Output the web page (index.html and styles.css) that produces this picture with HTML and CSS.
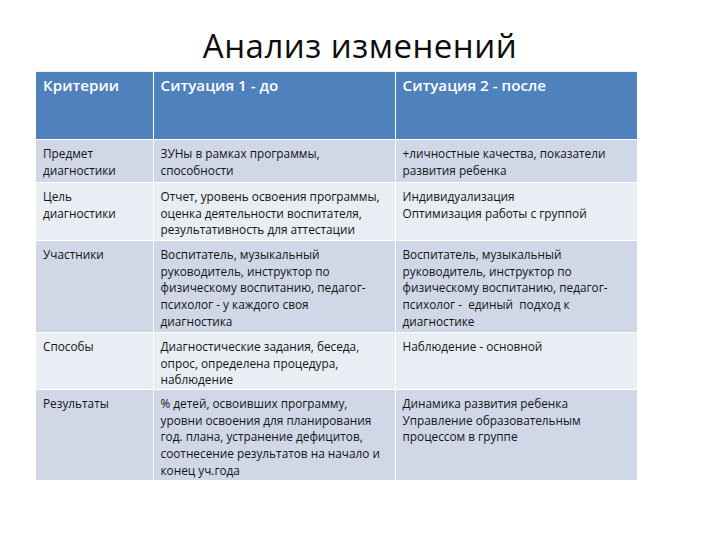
FILE: index.html
```html
<!DOCTYPE html>
<html lang="ru">
<head>
<meta charset="utf-8">
<title>Анализ изменений</title>
<link rel="stylesheet" href="styles.css">
</head>
<body>
<div class="slide">
  <h1 class="title">Анализ изменений</h1>
  <table class="grid">
    <colgroup>
      <col class="c1"><col class="c2"><col class="c3">
    </colgroup>
    <thead>
      <tr class="head">
        <th>Критерии</th>
        <th>Ситуация 1 - до</th>
        <th>Ситуация 2 - после</th>
      </tr>
    </thead>
    <tbody>
      <tr class="r1 odd">
        <td>Предмет<br>диагностики</td>
        <td>ЗУНы в рамках программы,<br>способности</td>
        <td>+личностные качества, показатели<br>развития ребенка</td>
      </tr>
      <tr class="r2 even">
        <td>Цель<br>диагностики</td>
        <td>Отчет, уровень освоения программы,<br>оценка деятельности воспитателя,<br>результативность для аттестации</td>
        <td>Индивидуализация<br>Оптимизация работы с группой</td>
      </tr>
      <tr class="r3 odd">
        <td>Участники</td>
        <td>Воспитатель, музыкальный<br>руководитель, инструктор по<br>физическому воспитанию, педагог-<br>психолог - у каждого своя<br>диагностика</td>
        <td>Воспитатель, музыкальный<br>руководитель, инструктор по<br>физическому воспитанию, педагог-<br>психолог -&nbsp; единый&nbsp; подход к<br>диагностике</td>
      </tr>
      <tr class="r4 even">
        <td>Способы</td>
        <td>Диагностические задания, беседа,<br>опрос, определена процедура,<br>наблюдение</td>
        <td>Наблюдение - основной</td>
      </tr>
      <tr class="r5 odd">
        <td>Результаты</td>
        <td>% детей, освоивших программу,<br>уровни освоения для планирования<br>год. плана, устранение дефицитов,<br>соотнесение результатов на начало и<br>конец уч.года</td>
        <td>Динамика развития ребенка<br>Управление образовательным<br>процессом в группе</td>
      </tr>
    </tbody>
  </table>
</div>
</body>
</html>
```

FILE: styles.css
```css
html, body {
  margin: 0;
  padding: 0;
  background: #ffffff;
}

.slide {
  width: 720px;
  height: 540px;
  box-sizing: border-box;
  padding-top: 24px;
  font-family: "Open Sans", "Noto Sans", sans-serif;
  color: #111111;
}

.title {
  margin: 0;
  height: 47px;
  font-size: 33px;
  font-weight: 400;
  line-height: 44px;
  text-align: center;
  color: #0d0d0d;
  letter-spacing: 0.5px;
}

.grid {
  margin-left: 36px;
  width: 601px;
  table-layout: fixed;
  border-collapse: collapse;
}

.c1 { width: 117px; }
.c2 { width: 242px; }
.c3 { width: 242px; }

.grid th,
.grid td {
  box-sizing: border-box;
  vertical-align: top;
  text-align: left;
  padding: 5px 2px 0 7px;
  border: 1px solid #ffffff;
  white-space: nowrap;
}

.grid th {
  background: #4f81bd;
  color: #ffffff;
  font-weight: 600;
  font-size: 15.2px;
  line-height: 18px;
  padding-top: 4px;
}

.grid td {
  font-size: 11.8px;
  line-height: 16.7px;
  color: #141414;
}

.grid tr:first-child th { border-top: 1px solid #f4f1e4; }

.odd td { background: #d0d8e8; }
.even td { background: #e9edf4; }

.head { height: 68px; }
.r1 { height: 43px; }
.r2 { height: 58px; }
.r3 { height: 92px; }
.r4 { height: 57px; }
.r5 { height: 90px; }

.grid td:first-child,
.grid th:first-child { border-left: none; }
.grid td:last-child,
.grid th:last-child { border-right: none; }
.grid tr.r5 td { border-bottom: none; }
```
